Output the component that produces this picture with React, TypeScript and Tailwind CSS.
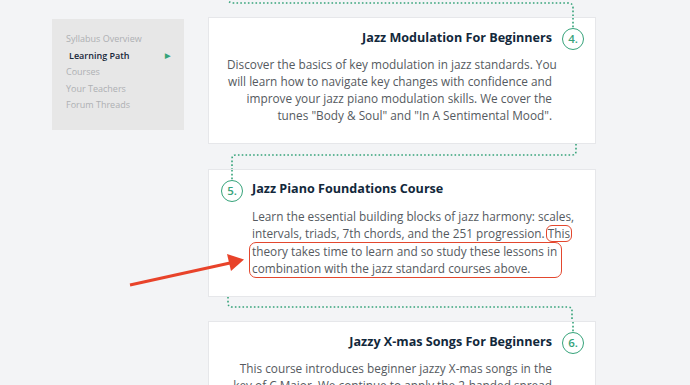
import React from "react";

const GREEN = "#36a37a";

function Connector({ d, h }: { d: string; h: number }) {
  return (
    <svg width={388} height={h} className="block" style={{ overflow: "visible" }}>
      <path d={d} fill="none" stroke={GREEN} strokeWidth={1.6} strokeDasharray="1.6 2.2" strokeLinecap="butt" />
    </svg>
  );
}

function Badge({ n, left }: { n: string; left: number }) {
  return (
    <div className="absolute top-0 flex flex-col items-center" style={{ left }}>
      <svg width={22} height={10} className="block">
        <line x1={11} y1={0} x2={11} y2={10} stroke={GREEN} strokeWidth={1.6} strokeDasharray="1.6 2.2" />
      </svg>
      <div className="w-[22px] h-[22px] rounded-full border-[1.5px] border-[#36a37a] flex items-center justify-center text-[11.5px] font-semibold text-[#36a37a] leading-none">
        {n}
      </div>
    </div>
  );
}

export default function App() {
  const font = { fontFamily: '"Open Sans", "Noto Sans", sans-serif' };
  return (
    <div className="relative w-[690px] h-[385px] overflow-hidden bg-[#f3f4f6]" style={font}>
      <div className="flex gap-[24px] pl-[52px]">
        {/* Sidebar */}
        <div className="mt-[19px] w-[132px] h-[111px] bg-[#e7e7e7] pt-[13px] pl-[14px] pr-[14px] flex flex-col gap-[2.5px] text-[9px] leading-[14px] text-[#aeb0b3]">
          <div>Syllabus Overview</div>
          <div className="flex items-center justify-between pl-[3px] text-[#17283a] font-semibold">
            <span>Learning Path</span>
            <span className="text-[#36a37a] text-[7px]">▶</span>
          </div>
          <div>Courses</div>
          <div>Your Teachers</div>
          <div>Forum Threads</div>
        </div>

        {/* Main column */}
        <div className="w-[388px] flex flex-col">
          <Connector h={17} d="M20 -2 Q20 3 25 3 H360 Q365 3 365 8 V17" />

          {/* Card 4 */}
          <div className="relative h-[127px] bg-white border border-[#e6e7ea] pt-[11px] pr-[43px] pl-[18px] text-right">
            <Badge n="4." left={353} />
            <div className="text-[12.6px] leading-[18px] font-bold text-[#12283b]">Jazz Modulation For Beginners</div>
            <div className="mt-[9px] text-[11.8px] leading-[17px] text-[#555a60] whitespace-nowrap">
              <div>Discover the basics of key modulation in jazz standards. You</div>
              <div>will learn how to navigate key changes with confidence and</div>
              <div>improve your jazz piano modulation skills. We cover the</div>
              <div>tunes "Body &amp; Soul" and "In A Sentimental Mood".</div>
            </div>
          </div>

          <Connector h={25} d="M368 0 V7 Q368 11 364 11 H28 Q24 11 24 15 V25" />

          {/* Card 5 */}
          <div className="relative h-[128px] bg-white border border-[#e6e7ea] pt-[10px] pl-[43px] pr-[20px]">
            <Badge n="5." left={12} />
            <div className="text-[12.6px] leading-[18px] font-bold text-[#12283b]">Jazz Piano Foundations Course</div>
            <div className="mt-[10px] text-[11.8px] leading-[17px] text-[#555a60] whitespace-nowrap">
              <div>Learn the essential building blocks of jazz harmony: scales,</div>
              <div>
                intervals, triads, 7th chords, and the 251 progression.
                <span className="ml-[1px] inline-block leading-[15px] px-[1px] rounded-[6px] border-[1.3px] border-[#e3472e]">This</span>
              </div>
              <div className="-ml-[3px] pl-[2px] w-[313px] rounded-[7px] border-[1.3px] border-[#e3472e]">
                <div>theory takes time to learn and so study these lessons in</div>
                <div>combination with the jazz standard courses above.</div>
              </div>
            </div>
          </div>

          <Connector h={24} d="M20 0 V6 Q20 10 24 10 H360 Q364 10 364 14 V24" />

          {/* Card 6 */}
          <div className="relative h-[100px] bg-white border border-[#e6e7ea] pt-[11px] pr-[43px] pl-[18px] text-right">
            <Badge n="6." left={353} />
            <div className="text-[12.6px] leading-[18px] font-bold text-[#12283b]">Jazzy X-mas Songs For Beginners</div>
            <div className="mt-[9px] text-[11.8px] leading-[17px] text-[#555a60] whitespace-nowrap">
              <div>This course introduces beginner jazzy X-mas songs in the</div>
              <div>key of C Major. We continue to apply the 2-handed spread</div>
            </div>
          </div>
        </div>
      </div>

      {/* Red arrow annotation */}
      <svg className="absolute left-0 top-0 pointer-events-none" width={690} height={385}>
        <line x1={130} y1={285} x2={230} y2={263} stroke="#e8432a" strokeWidth={3} />
        <polygon points="244,259.5 227,254 231,271" fill="#e8432a" />
      </svg>
    </div>
  );
}
